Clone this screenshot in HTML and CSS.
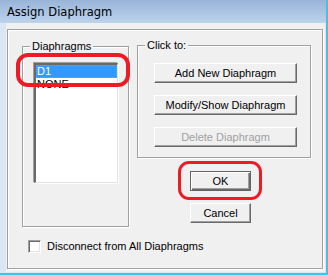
FILE: index.html
```html
<!DOCTYPE html>
<html lang="en">
<head>
    <meta charset="UTF-8">
    <title>Assign Diaphragm</title>
    <link rel="stylesheet" href="styles.css">
</head>
<body>
    <div class="window">
        <div class="titlebar">Assign Diaphragm</div>
        <div class="client">
            <div class="outer">
                <div class="top">
                    <div class="group diaph">
                        <span class="caption">Diaphragms</span>
                        <div class="list">
                            <div class="item sel">D1</div>
                            <div class="item">NONE</div>
                        </div>
                        <span class="mark mark-d1"></span>
                    </div>
                    <div class="right">
                        <div class="group clickto">
                            <span class="caption">Click to:</span>
                            <div class="btn wide">Add New Diaphragm</div>
                            <div class="btn wide">Modify/Show Diaphragm</div>
                            <div class="btn wide off">Delete Diaphragm</div>
                        </div>
                        <div class="actions">
                            <div class="btn small def">OK</div>
                            <div class="btn small">Cancel</div>
                            <span class="mark mark-ok"></span>
                        </div>
                    </div>
                </div>
                <label class="check"><span class="box"></span>Disconnect from All Diaphragms</label>
            </div>
        </div>
    </div>
</body>
</html>
```

FILE: styles.css
```css
* {
    margin: 0;
    padding: 0;
    box-sizing: border-box;
}
body {
    background: #dbe6f3;
    font-family: "Liberation Sans", Arial, sans-serif;
    font-size: 11px;
    color: #000;
}
.window {
    width: 328px;
    height: 275px;
    background: #dbe6f3;
    border-right: 2px solid #3cc4ee;
    border-bottom: 2px solid #3cc4ee;
    display: flex;
    flex-direction: column;
}
.titlebar {
    height: 23px;
    padding-left: 7px;
    line-height: 24px;
    font-family: "DejaVu Sans", sans-serif;
    font-size: 11.5px;
    background: linear-gradient(#98b4d8, #bcd3ec);
}
.client {
    flex: 1;
    margin: 0 1px 1px 6px;
    background: #f0f0f0;
    padding: 6px 0 0 1px;
}
/* etched group frames */
.outer, .group {
    border: 1px solid #a0a0a0;
    box-shadow: inset 1px 1px #fff, 1px 1px #fff;
}
.outer {
    width: 316px;
    height: 240px;
    padding: 16px 0 0 14px;
}
.top {
    display: flex;
    gap: 8px;
}
.group {
    position: relative;
}
.caption {
    display: block;
    width: fit-content;
    margin-top: -7px;
    padding: 0 2px;
    line-height: 13px;
    background: #f0f0f0;
}
.diaph {
    width: 107px;
    height: 181px;
    padding-left: 11px;
}
.diaph .caption {
    margin-left: -4px;
}
.list {
    width: 84px;
    height: 120px;
    margin-top: 10px;
    background: #fff;
    border-top: 2px solid #696969;
    border-left: 2px solid #696969;
    border-right: 1px solid #e3e3e3;
    border-bottom: 1px solid #e3e3e3;
    box-shadow: -1px -1px #a0a0a0, 1px 1px #fff;
}
.item {
    height: 13px;
    line-height: 13px;
    padding-left: 1px;
}
.item.sel {
    background: #3399ff;
    color: #fff;
    outline: 1px dotted #e08a2c;
    outline-offset: -1px;
}
.right {
    display: flex;
    flex-direction: column;
}
.clickto {
    width: 174px;
    height: 113px;
    margin-top: -1px;
    padding-left: 16px;
    display: flex;
    flex-direction: column;
    gap: 12px;
}
.clickto .caption {
    margin-bottom: -1px;
    margin-left: -9px;
}
.btn {
    height: 20px;
    line-height: 18px;
    text-align: center;
    background: #f0f0f0;
    border: 1px solid;
    border-color: #fff #696969 #696969 #fff;
    box-shadow: inset -1px -1px #a0a0a0;
}
.wide {
    width: 143px;
}
.off {
    color: #a0a0a0;
}
.actions {
    position: relative;
    display: flex;
    flex-direction: column;
    gap: 12px;
    padding: 13px 0 0 53px;
}
.small {
    width: 61px;
}
.def {
    border-color: #646464;
    box-shadow: inset 1px 1px #fff, inset -1px -1px #696969, inset -2px -2px #a0a0a0;
}
/* red annotation rings */
.mark {
    position: absolute;
    border: 4px solid #ed1c24;
    border-radius: 12px;
}
.mark-d1 {
    left: -7px;
    top: 6px;
    width: 114px;
    height: 34px;
}
.mark-ok {
    left: 41px;
    top: 3px;
    width: 84px;
    height: 39px;
    border-width: 3px;
    border-radius: 11px;
}
.check {
    display: flex;
    align-items: center;
    gap: 6px;
    margin: 13px 0 0 6px;
    line-height: 13px;
}
.box {
    width: 13px;
    height: 13px;
    background: #fff;
    border-top: 1px solid #a0a0a0;
    border-left: 1px solid #a0a0a0;
    border-right: 1px solid #fff;
    border-bottom: 1px solid #fff;
    box-shadow: inset 1px 1px #696969, inset -1px -1px #e3e3e3;
}
```
